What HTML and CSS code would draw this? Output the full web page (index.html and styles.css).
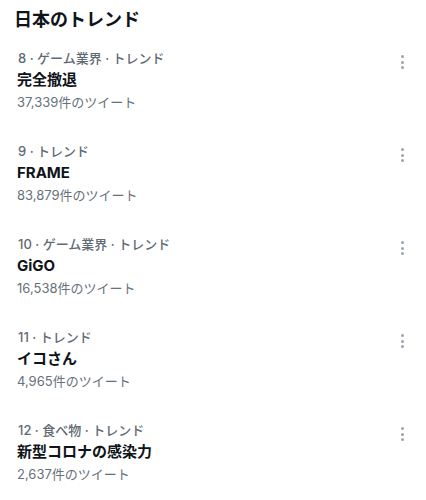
FILE: index.html
```html
<!DOCTYPE html>
<html>
<head>
  <meta charset="utf-8">
  <title>日本のトレンド</title>
  <link rel="stylesheet" href="styles.css">
</head>
<body>
  <h2 class="heading">日本のトレンド</h2>

  <div class="trend">
    <div class="trend-body">
      <div class="meta">8 · ゲーム業界 · トレンド</div>
      <div class="name">完全撤退</div>
      <div class="count">37,339件のツイート</div>
    </div>
    <div class="more"><span></span><span></span><span></span></div>
  </div>

  <div class="trend">
    <div class="trend-body">
      <div class="meta">9 · トレンド</div>
      <div class="name">FRAME</div>
      <div class="count">83,879件のツイート</div>
    </div>
    <div class="more"><span></span><span></span><span></span></div>
  </div>

  <div class="trend">
    <div class="trend-body">
      <div class="meta">10 · ゲーム業界 · トレンド</div>
      <div class="name">GiGO</div>
      <div class="count">16,538件のツイート</div>
    </div>
    <div class="more"><span></span><span></span><span></span></div>
  </div>

  <div class="trend">
    <div class="trend-body">
      <div class="meta">11 · トレンド</div>
      <div class="name">イコさん</div>
      <div class="count">4,965件のツイート</div>
    </div>
    <div class="more"><span></span><span></span><span></span></div>
  </div>

  <div class="trend">
    <div class="trend-body">
      <div class="meta">12 · 食べ物 · トレンド</div>
      <div class="name">新型コロナの感染力</div>
      <div class="count">2,637件のツイート</div>
    </div>
    <div class="more"><span></span><span></span><span></span></div>
  </div>
</body>
</html>
```

FILE: styles.css
```css
body {
  margin: 0;
  padding: 6px 0 0;
  background: #fff;
  font-family: Inter, "Noto Sans CJK JP", sans-serif;
  color: #0f1419;
}
.heading {
  margin: 0;
  padding: 0 14px;
  font-size: 18px;
  line-height: 28px;
  font-weight: 700;
}
.trend {
  display: flex;
  align-items: flex-start;
  padding: 14px 18px 15px 17px;
}
.trend-body {
  flex: 1;
}
.meta {
  font-size: 13px;
  line-height: 20px;
  font-weight: 500;
  color: #5f6a74;
  padding-left: 1px;
}
.name {
  font-size: 15px;
  line-height: 24px;
  font-weight: 700;
}
.count {
  font-size: 13px;
  line-height: 20px;
  color: #66717b;
}
.more {
  display: flex;
  flex-direction: column;
  align-items: center;
  gap: 2.5px;
  margin-top: 7px;
  width: 12px;
}
.more span {
  width: 3px;
  height: 3px;
  border-radius: 50%;
  background: #9aa5ae;
}
```
